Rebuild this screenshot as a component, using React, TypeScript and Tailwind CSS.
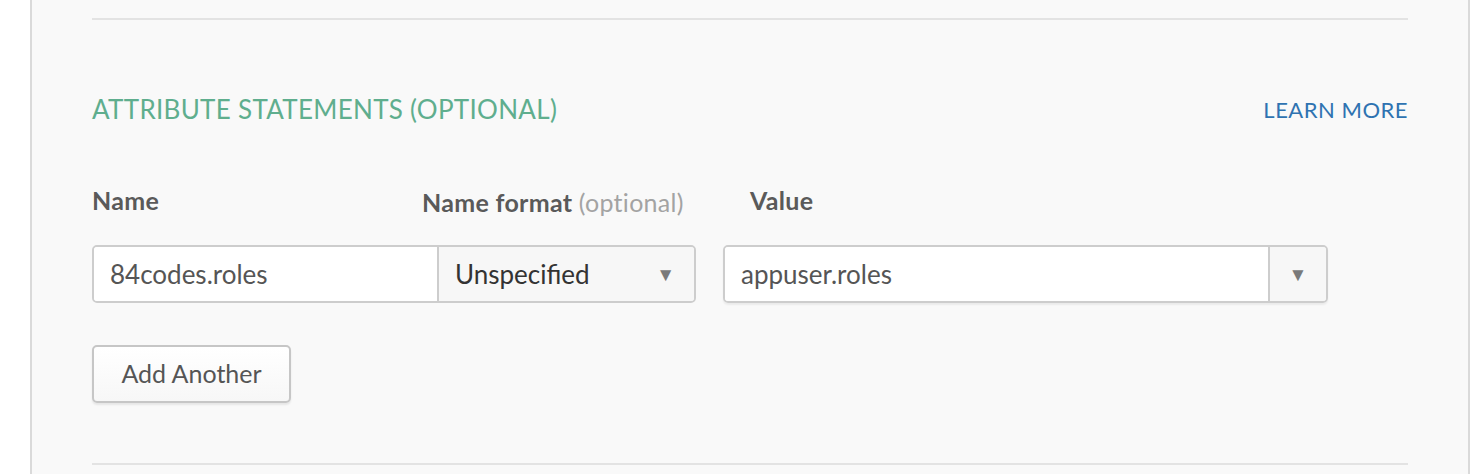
export default function App() {
  return (
    <div className="flex h-[474px] w-full bg-white pl-[30px] font-['Lato','Noto_Sans',sans-serif] overflow-hidden">
      <div className="flex-1 border-x-2 border-[#dadada] bg-[#f9f9f9] px-[60px]">
        <div className="mt-[18px] border-t-2 border-[#e3e3e3]" />

        <div className="mt-[72px] flex h-[34px] items-center justify-between">
          <h2 className="text-[26px] font-normal uppercase tracking-[0.3px] text-[#5fae8e]">
            Attribute Statements (optional)
          </h2>
          <a className="text-[22px] uppercase tracking-[0.5px] text-[#2f73b1]">Learn more</a>
        </div>

        <div className="mt-[60px] flex h-[30px] items-center text-[25px] font-bold tracking-[0.3px] text-[#5a5a5a]">
          <div className="w-[330px]">Name</div>
          <div className="w-[328px] pt-[3px]">
            Name format <span className="font-normal text-[#a3a3a3]">(optional)</span>
          </div>
          <div>Value</div>
        </div>

        <div className="mt-[29px] flex items-stretch">
          <div className="flex h-[58px] w-[604px] overflow-hidden rounded-[5px] border-2 border-[#cdcdcd]">
            <div className="flex w-[343px] items-center bg-white pl-[16px] text-[26px] text-[#555]">
              84codes.roles
            </div>
            <div className="flex flex-1 items-center justify-between border-l-2 border-[#cdcdcd] bg-[#f7f7f7] pl-[16px] pr-[19px] text-[26px] text-[#333]">
              <span>Unspecified</span>
              <span className="text-[19px] text-[#7a7a7a]">▼</span>
            </div>
          </div>

          <div className="ml-[27px] flex h-[58px] w-[605px] overflow-hidden rounded-[5px] border-2 border-[#cdcdcd] shadow-[0_2px_2px_rgba(0,0,0,0.06)]">
            <div className="flex flex-1 items-center bg-white pl-[16px] text-[26px] text-[#555]">
              appuser.roles
            </div>
            <div className="flex w-[58px] items-center justify-center border-l-2 border-[#cdcdcd] bg-[#f7f7f7] text-[19px] text-[#7a7a7a]">
              ▼
            </div>
          </div>
        </div>

        <button className="mt-[42px] flex h-[58px] w-[199px] items-center justify-center rounded-[5px] border-2 border-[#c6c6c6] bg-gradient-to-b from-white to-[#f7f7f7] text-[25px] text-[#555] shadow-[0_2px_2px_rgba(0,0,0,0.08)]">
          Add Another
        </button>

        <div className="mt-[60px] border-t-2 border-[#e3e3e3]" />
      </div>
    </div>
  );
}
